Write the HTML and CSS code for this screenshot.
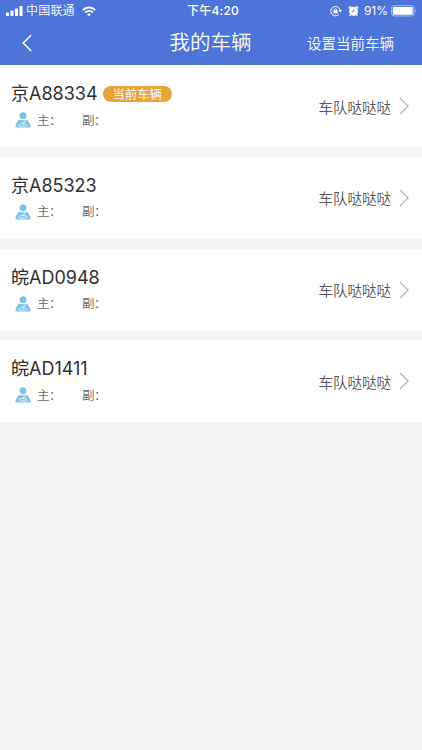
FILE: index.html
```html
<!DOCTYPE html>
<html lang="zh-CN">
<head>
<meta charset="utf-8">
<title>我的车辆</title>
<link rel="stylesheet" href="styles.css">
</head>
<body>
<svg class="defs" width="0" height="0" aria-hidden="true">
  <symbol id="driver" viewBox="0 0 16 16">
    <circle cx="8" cy="3.8" r="3.5" fill="#7dc3e3"/>
    <path d="M4.4 7.5Q8 9.2 11.6 7.5C13.4 8.5 14.6 11.6 15.5 13.4Q16 15.7 13.9 15.6H2.1Q0 15.7.5 13.4C1.4 11.6 2.6 8.5 4.4 7.5Z" fill="#7dc3e3"/>
    <path d="M3.3 14.2C4.2 10.4 11.8 10.4 12.7 14.2M5 14.5Q8 12.7 11 14.5M11 8.5L7.5 11.3" fill="none" stroke="#fff" stroke-width=".8"/>
  </symbol>
  <symbol id="chevron" viewBox="0 0 10 18">
    <path d="M.8.8L9 9L.8 17.2" fill="none" stroke="#bcbcbc" stroke-width="1.5"/>
  </symbol>
</svg>
<header class="header">
  <div class="status">
    <div class="carrier">
      <svg width="17" height="10" viewBox="0 0 17 10" fill="#fff"><rect x="0" y="6.5" width="3" height="3.5" rx=".7"/><rect x="4.5" y="4.5" width="3" height="5.5" rx=".7"/><rect x="9" y="2.5" width="3" height="7.5" rx=".7"/><rect x="13.5" width="3" height="10" rx=".7"/></svg>
      <span>中国联通</span>
      <svg class="wifi" width="14" height="11" viewBox="0 0 14 11" fill="none" stroke="#fff" stroke-width="2"><path d="M.8 4.1C4.3.5 9.7.5 13.2 4.1M3.2 6.5C5.4 4.4 8.6 4.4 10.8 6.5"/><path d="M5 8.3Q7 6.8 9 8.3L7 10.5Z" fill="#fff" stroke="none"/></svg>
    </div>
    <time class="clock">下午4:20</time>
    <div class="power">
      <svg width="12" height="12" viewBox="0 0 12 12" fill="none" stroke="#fff"><path d="M9.1 9.2A4.7 4.7 0 1 1 10.1 5.2" stroke-width="1"/><path d="M8.5 5H12L10.2 7.5Z" fill="#fff" stroke="none"/><rect x="3.4" y="5.2" width="4.2" height="3.2" fill="#fff" stroke="none"/><path d="M4.3 5.4V4.4Q5.5 2.4 6.7 4.4V5.4" stroke-width=".8"/></svg>
      <svg class="alarm" width="11" height="12" viewBox="0 0 11 12"><circle cx="5.5" cy="6.3" r="4.5" fill="#fff"/><path d="M.8 3.3L3 1.3M8 1.3L10.2 3.3M2.7 9.6L1.7 10.8M8.3 9.6L9.3 10.8" stroke="#fff" stroke-width="1.5"/><path d="M5.8 3.9V6.6H3.8" fill="none" stroke="#4c74d9" stroke-width=".8"/></svg>
      <span class="percent">91%</span>
      <svg class="battery" width="26" height="12" viewBox="0 0 26 12"><rect x=".5" y=".7" width="22.5" height="10.3" rx="2.5" fill="none" stroke="#b6c7f1" stroke-width=".9"/><rect x="1.8" y="2" width="19.9" height="7.7" rx="1" fill="#fff"/><path d="M24.2 4Q26 5.8 24.2 7.7Z" fill="#b6c7f1"/></svg>
    </div>
  </div>
  <nav class="nav">
    <svg class="back" width="10" height="18" viewBox="0 0 10 18"><path d="M9.2 1L1.2 9L9.2 17" fill="none" stroke="#fff" stroke-width="1.5"/></svg>
    <h1>我的车辆</h1>
    <a class="action">设置当前车辆</a>
  </nav>
</header>
<main class="list">
  <article class="card">
    <div class="info">
      <h2>京A88334<span class="badge">当前车辆</span></h2>
      <div class="drivers"><svg width="16" height="16"><use href="#driver"/></svg><span class="main-driver">主：</span><span>副：</span></div>
    </div>
    <span class="team">车队哒哒哒</span><svg class="arrow" width="10" height="18"><use href="#chevron"/></svg>
  </article>
  <article class="card">
    <div class="info">
      <h2>京A85323</h2>
      <div class="drivers"><svg width="16" height="16"><use href="#driver"/></svg><span class="main-driver">主：</span><span>副：</span></div>
    </div>
    <span class="team">车队哒哒哒</span><svg class="arrow" width="10" height="18"><use href="#chevron"/></svg>
  </article>
  <article class="card">
    <div class="info">
      <h2>皖AD0948</h2>
      <div class="drivers"><svg width="16" height="16"><use href="#driver"/></svg><span class="main-driver">主：</span><span>副：</span></div>
    </div>
    <span class="team">车队哒哒哒</span><svg class="arrow" width="10" height="18"><use href="#chevron"/></svg>
  </article>
  <article class="card">
    <div class="info">
      <h2>皖AD1411</h2>
      <div class="drivers"><svg width="16" height="16"><use href="#driver"/></svg><span class="main-driver">主：</span><span>副：</span></div>
    </div>
    <span class="team">车队哒哒哒</span><svg class="arrow" width="10" height="18"><use href="#chevron"/></svg>
  </article>
</main>
</body>
</html>
```
FILE: styles.css
```css
* { box-sizing: border-box; }
body {
  margin: 0;
  min-height: 750px;
  background: #f4f4f4;
  color: #303030;
  font-family: Inter, "Noto Sans CJK SC", sans-serif;
  font-weight: 350;
}
svg { display: block; flex: none; }
.defs { position: absolute; }
h1, h2 { margin: 0; font-weight: 350; }
.header { height: 65px; background: #4c74d9; color: #fff; }
.status {
  display: grid;
  grid-template-columns: 1fr auto 1fr;
  align-items: center;
  height: 22px;
  padding: 0 6px;
  font-size: 12px;
  line-height: 22px;
}
.carrier, .power { display: flex; align-items: center; }
.carrier span { margin-left: 3px; letter-spacing: .2px; }
.wifi { margin-left: 7px; }
.clock { margin-left: 4px; font-weight: 500; letter-spacing: .25px; }
.power { justify-content: flex-end; }
.alarm { margin-left: 6px; }
.percent { margin-left: 5px; font-weight: 400; }
.battery { margin: 0 -1px 0 3px; }
.nav {
  display: grid;
  grid-template-columns: 1fr auto 1fr;
  align-items: center;
  height: 41px;
  padding: 0 28px 0 22px;
}
.back { margin-top: 1px; }
.nav h1 { font-size: 20.5px; line-height: 40px; margin-left: 5px; }
.action { justify-self: end; font-size: 14.5px; white-space: nowrap; }
.list { display: grid; gap: 9.8px; }
.card {
  display: flex;
  align-items: center;
  height: 82px;
  padding: 0 13px 0 11px;
  background: #fff;
}
.info { flex: 1; align-self: flex-start; padding-top: 15px; }
h2 {
  display: flex;
  align-items: center;
  height: 28px;
  font-size: 18px;
  font-weight: 400;
  line-height: 28px;
}
.badge {
  height: 16px;
  margin-left: 5px;
  padding: 0 10px;
  border-radius: 8px;
  background: #e8a33c;
  color: #fff;
  font-size: 12.3px;
  font-weight: 350;
  line-height: 17px;
}
.drivers {
  display: flex;
  align-items: center;
  height: 24px;
  padding-left: 4px;
  color: #666;
  font-size: 12.5px;
  line-height: 18px;
}
.drivers span { margin-top: 1px; letter-spacing: -.6px; }
.drivers .main-driver { width: 45px; margin-left: 6px; }
.team { color: #555; font-size: 14.5px; }
.arrow { margin-left: 8px; }
```
